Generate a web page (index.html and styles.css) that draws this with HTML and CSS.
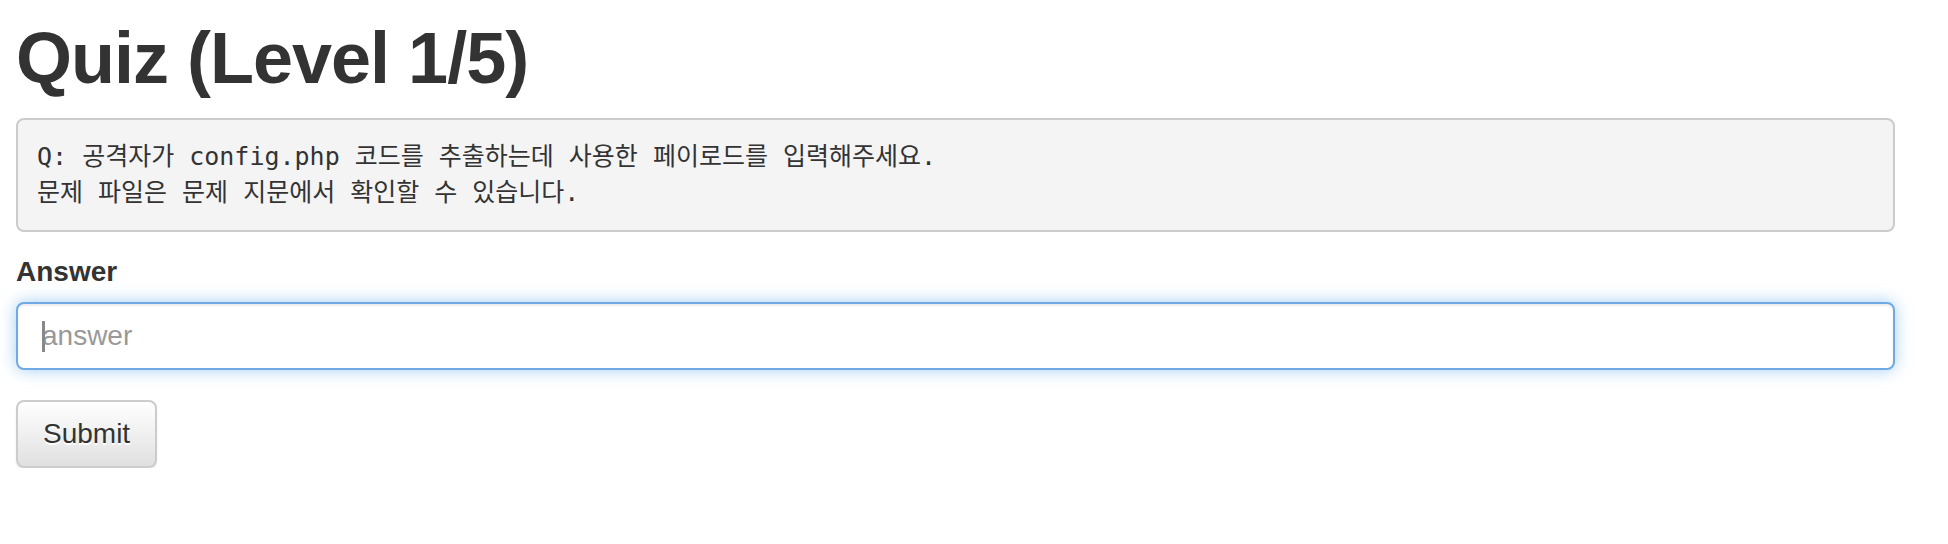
FILE: index.html
```html
<!DOCTYPE html>
<html lang="ko">
<head>
<meta charset="utf-8">
<title>Quiz</title>
<link rel="stylesheet" href="styles.css">
</head>
<body>
<div class="page">
  <h1 class="title">Quiz (Level 1/5)</h1>
  <pre class="question">Q: 공격자가 config.php 코드를 추출하는데 사용한 페이로드를 입력해주세요.
문제 파일은 문제 지문에서 확인할 수 있습니다.</pre>
  <form class="quiz-form">
    <div class="form-group">
      <label class="label" for="answer">Answer</label>
      <div class="input-wrap">
        <span class="caret"></span>
        <input class="form-control" id="answer" type="text" placeholder="answer">
      </div>
    </div>
    <button class="btn" type="button">Submit</button>
  </form>
</div>
</body>
</html>
```

FILE: styles.css
```css
html, body {
  margin: 0;
  padding: 0;
  background: #fff;
}

body {
  font-family: "Liberation Sans", Arial, sans-serif;
  font-size: 28px;
  line-height: 1.42857;
  color: #333;
}

.page {
  padding: 19px 0 0 16px;
  max-width: 1879px;
}

.title {
  font-family: "Liberation Sans", Arial, sans-serif;
  font-weight: bold;
  font-size: 72px;
  line-height: 1.1;
  letter-spacing: -1px;
  margin: 0 0 20px;
  color: #333;
}

.question {
  margin: 0 0 20px;
  padding: 19px;
  background: #f4f4f4;
  border: 2px solid #ccc;
  border-radius: 8px;
  font-family: "DejaVu Sans Mono", "Noto Sans CJK KR", monospace;
  font-size: 25px;
  line-height: 36px;
  color: #333;
  white-space: pre-wrap;
}

.form-group {
  margin-bottom: 30px;
}

.label {
  display: block;
  font-weight: bold;
  margin-bottom: 10px;
}

.input-wrap {
  position: relative;
}

.form-control {
  display: block;
  box-sizing: border-box;
  width: 100%;
  height: 68px;
  padding: 12px 24px;
  font-family: "Liberation Sans", Arial, sans-serif;
  font-size: 28px;
  line-height: 40px;
  color: #555;
  background: #fff;
  border: 2px solid #6faae6;
  border-radius: 8px;
  outline: none;
  box-shadow: inset 0 2px 2px rgba(0, 0, 0, 0.075), 0 0 16px rgba(102, 175, 233, 0.6);
}

.form-control::placeholder {
  color: #999;
}

.caret {
  position: absolute;
  left: 26px;
  top: 19px;
  width: 3px;
  height: 31px;
  background: #888;
  z-index: 1;
}

.btn {
  display: inline-block;
  box-sizing: border-box;
  height: 68px;
  padding: 12px 25px;
  font-family: "Liberation Sans", Arial, sans-serif;
  font-size: 28px;
  line-height: 40px;
  color: #333;
  text-shadow: 0 2px 0 #fff;
  background: linear-gradient(to bottom, #fff 0%, #e0e0e0 100%);
  border: 2px solid #ccc;
  border-radius: 8px;
  box-shadow: inset 0 2px 0 rgba(255, 255, 255, 0.15), 0 2px 2px rgba(0, 0, 0, 0.075);
  cursor: pointer;
}
```
